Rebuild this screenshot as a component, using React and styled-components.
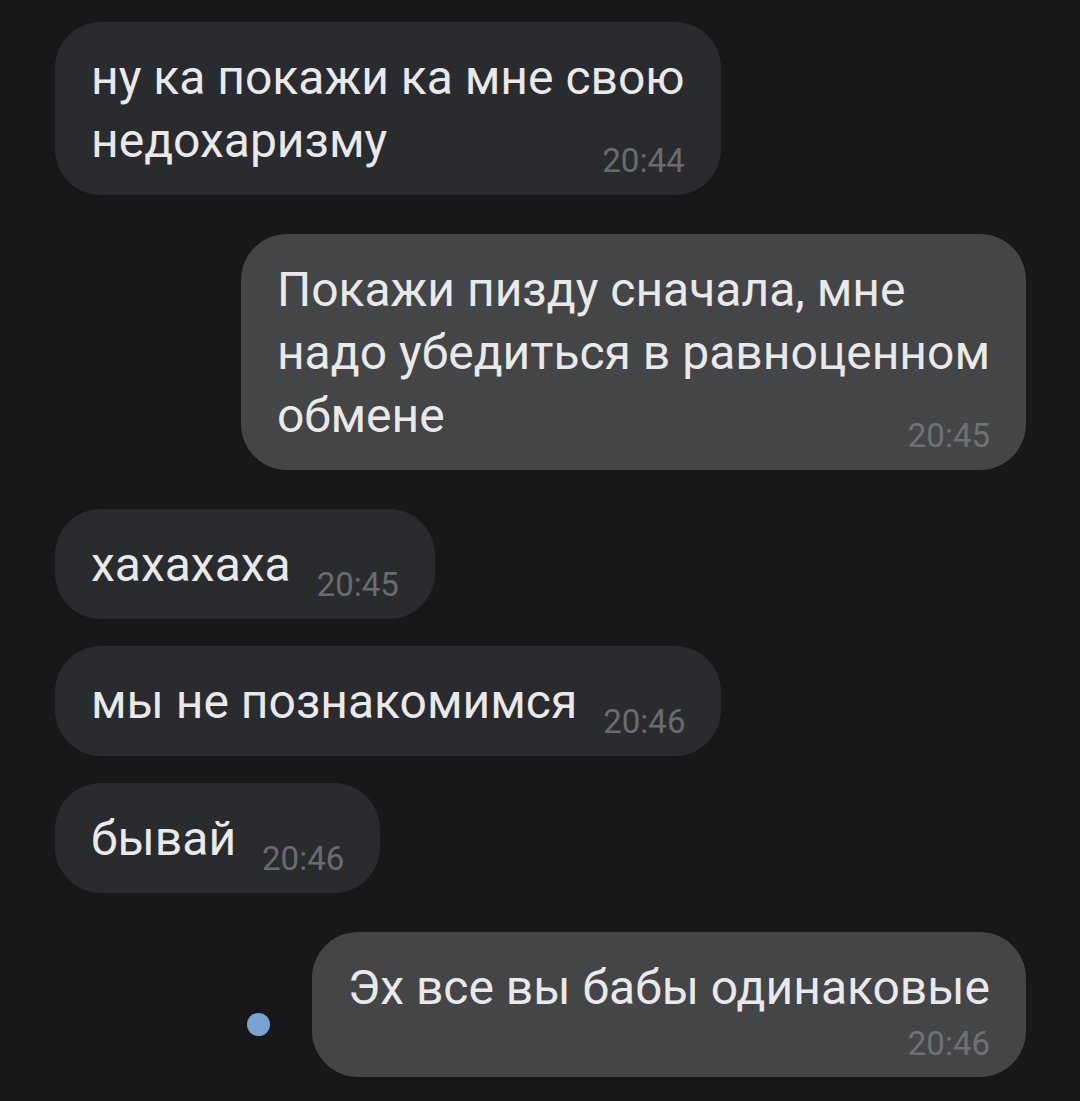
import React from "react";
import styled, { createGlobalStyle } from "styled-components";

const GlobalStyle = createGlobalStyle`
  html, body {
    margin: 0;
    padding: 0;
    background: #18181a;
  }
  body {
    font-family: Roboto, "Noto Sans", "Liberation Sans", sans-serif;
  }
`;

const messages = [
  { id: 1, out: false, lines: ["ну ка покажи ка мне свою", "недохаризму"], time: "20:44" },
  {
    id: 2,
    out: true,
    lines: ["Покажи пизду сначала, мне", "надо убедиться в равноценном", "обмене"],
    time: "20:45",
  },
  { id: 3, out: false, lines: ["хахахаха"], time: "20:45" },
  { id: 4, out: false, lines: ["мы не познакомимся"], time: "20:46" },
  { id: 5, out: false, lines: ["бывай"], time: "20:46" },
  { id: 6, out: true, lines: ["Эх все вы бабы одинаковые"], time: "20:46", timeBelow: true, unread: true },
];

const App = () => (
  <>
    <GlobalStyle />
    <Chat>
      {messages.map((m, i) => {
        const prev = messages[i - 1];
        const gap = !prev ? 0 : prev.out === m.out ? 27 : 39;
        return (
          <Row key={m.id} out={m.out} gap={gap}>
            {m.unread && <UnreadDot />}
            <Bubble out={m.out}>
              {m.lines.map((line, li) => (
                <React.Fragment key={li}>
                  {li > 0 && <br />}
                  {line}
                </React.Fragment>
              ))}
              <Time out={m.out} below={m.timeBelow}>
                {m.time}
              </Time>
            </Bubble>
          </Row>
        );
      })}
    </Chat>
  </>
);

export default App;

const Chat = styled.div`
  width: 1080px;
  box-sizing: border-box;
  padding: 22px 54px 24px 55px;
  display: flex;
  flex-direction: column;
`;

const Row = styled.div`
  display: flex;
  justify-content: ${(p) => (p.out ? "flex-end" : "flex-start")};
  align-items: flex-end;
  margin-top: ${(p) => p.gap}px;
`;

const Bubble = styled.div`
  display: flow-root;
  box-sizing: border-box;
  max-width: 800px;
  padding: 24px 36px 23px 36px;
  border-radius: 46px;
  background: ${(p) => (p.out ? "#444547" : "#2a2b2e")};
  color: #e9e9ea;
  font-size: 48px;
  line-height: 63px;
  white-space: nowrap;
`;

const Time = styled.span`
  float: ${(p) => (p.below ? "none" : "right")};
  display: block;
  text-align: right;
  margin: ${(p) => (p.below ? "8px 0 -6px 0" : "35px 0 -20px 26px")};
  font-size: 33px;
  line-height: 33px;
  color: ${(p) => (p.out ? "#707174" : "#6a6b6e")};
`;

const UnreadDot = styled.span`
  width: 23px;
  height: 23px;
  border-radius: 50%;
  background: #7aa3d4;
  margin: 0 42px 41px 0;
  flex-shrink: 0;
`;
